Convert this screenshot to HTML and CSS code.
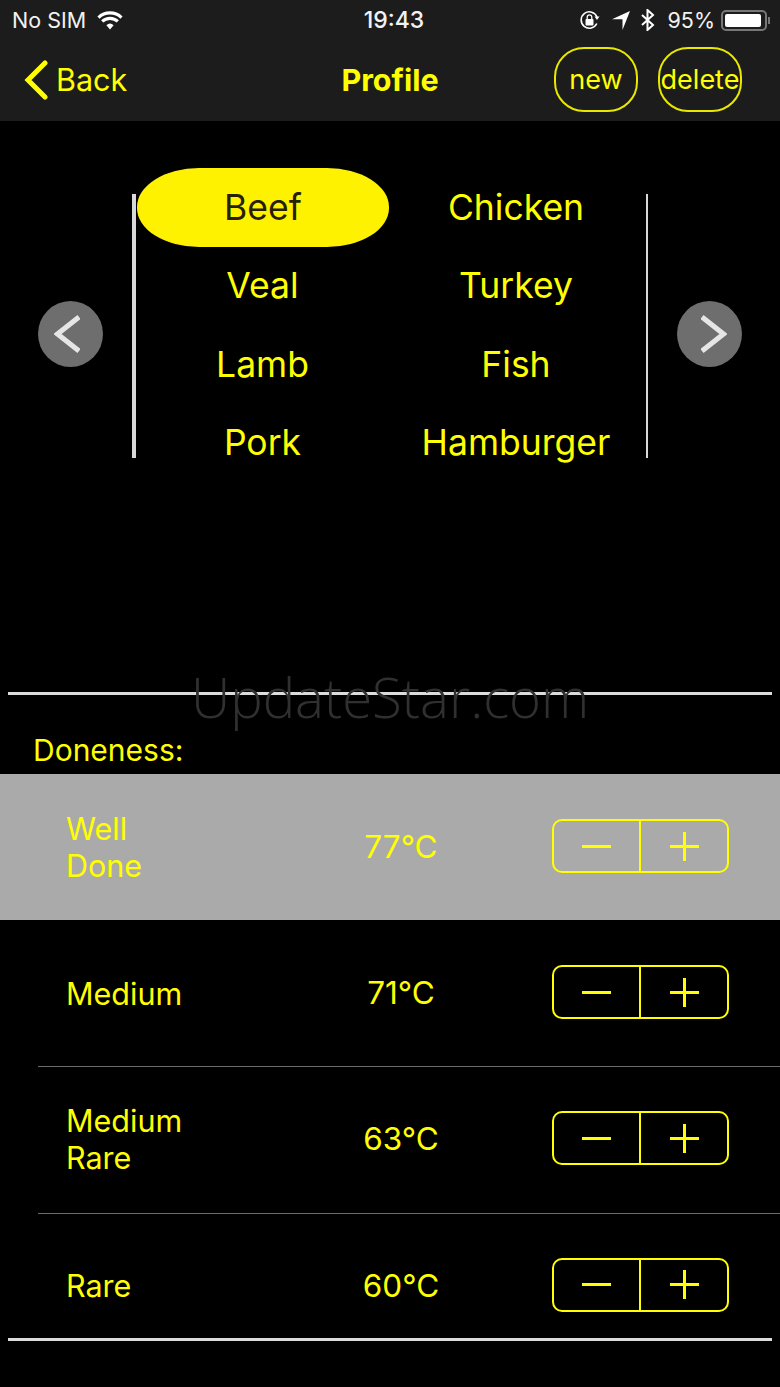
FILE: index.html
```html
<!DOCTYPE html>
<html lang="en">
<head>
  <meta charset="UTF-8">
  <meta name="viewport" content="width=device-width, initial-scale=1.0">
  <title>Profile</title>
  <link rel="stylesheet" href="styles.css">
</head>
<body>
  <!-- Top bars -->
  <header class="top">
    <div class="status">
      <div class="status-left">
        <span>No SIM</span>
        <svg class="wifi" width="26" height="19" viewBox="0 0 26 19">
          <path d="M13 18.5l3.6-4.3a5.4 5.4 0 0 0-7.2 0z" fill="#fff"/>
          <path d="M1.5 6.6a16.6 16.6 0 0 1 23 0M5.2 10.4a11.4 11.4 0 0 1 15.6 0" fill="none" stroke="#fff" stroke-width="3.2"/>
        </svg>
      </div>
      <div class="status-time">19:43</div>
      <div class="status-right">
        <svg width="21" height="21" viewBox="0 0 21 21">
          <path d="M17.8 13.5A8.2 8.2 0 1 1 18 7" fill="none" stroke="#fff" stroke-width="1.6"/>
          <path d="M15.5 6.5h5l-2.5 3.5z" fill="#fff"/>
          <rect x="6.5" y="9" width="8" height="6.5" rx="1" fill="#fff"/>
          <path d="M8.2 9V7.2a2.3 2.3 0 0 1 4.6 0V9" fill="none" stroke="#fff" stroke-width="1.3"/>
        </svg>
        <svg class="loc" width="18" height="19" viewBox="0 0 18 19"><path d="M18 0L10.5 19V8.2H0z" fill="#fff"/></svg>
        <svg class="bt" width="14" height="22" viewBox="0 0 14 22"><path d="M1 6l11 10-5.5 5V1L12 6 1 16" fill="none" stroke="#fff" stroke-width="2"/></svg>
        <span class="pct">95%</span>
        <div class="battery"><div class="battery-fill"></div></div>
        <div class="battery-nub"></div>
      </div>
    </div>

    <nav class="nav">
      <a class="back">
        <svg width="24" height="40" viewBox="0 0 24 40"><path d="M21 3L4 20l17 17" fill="none" stroke="#ffff00" stroke-width="5" stroke-linecap="round"/></svg>
        <span>Back</span>
      </a>
      <div class="nav-title">Profile</div>
      <div class="nav-actions">
        <button class="nav-btn">new</button>
        <button class="nav-btn">delete</button>
      </div>
    </nav>
  </header>

  <!-- Meat picker -->
  <section class="picker">
    <button class="arrow prev">
      <svg width="26" height="38" viewBox="0 0 26 38"><path d="M25 2L3.500 19 25 36" fill="none" stroke="#e6e6e6" stroke-width="5"/></svg>
    </button>
    <div class="picker-line"></div>
    <div class="meats">
      <div class="meat active">Beef</div>
      <div class="meat">Chicken</div>
      <div class="meat">Veal</div>
      <div class="meat">Turkey</div>
      <div class="meat">Lamb</div>
      <div class="meat">Fish</div>
      <div class="meat">Pork</div>
      <div class="meat">Hamburger</div>
    </div>
    <div class="picker-line thin"></div>
    <button class="arrow next">
      <svg width="26" height="38" viewBox="0 0 26 38"><path d="M1 2l21.500 17L1 36" fill="none" stroke="#e6e6e6" stroke-width="5"/></svg>
    </button>
  </section>

  <!-- Doneness list -->
  <section class="doneness">
    <div class="rule"></div>
    <div class="watermark">UpdateStar.com</div>
    <h2 class="doneness-title">Doneness:</h2>

    <div class="row selected">
      <div class="row-name">Well<br>Done</div>
      <div class="row-temp">77°C</div>
      <div class="stepper"><button class="step minus"></button><button class="step plus"></button></div>
    </div>
    <div class="row">
      <div class="row-name">Medium</div>
      <div class="row-temp">71°C</div>
      <div class="stepper"><button class="step minus"></button><button class="step plus"></button></div>
    </div>
    <div class="row">
      <div class="row-name">Medium<br>Rare</div>
      <div class="row-temp">63°C</div>
      <div class="stepper"><button class="step minus"></button><button class="step plus"></button></div>
    </div>
    <div class="row last">
      <div class="row-name">Rare</div>
      <div class="row-temp">60°C</div>
      <div class="stepper"><button class="step minus"></button><button class="step plus"></button></div>
    </div>
    <div class="rule"></div>
  </section>
</body>
</html>
```

FILE: styles.css
```css
/* General Styling */
* {
  box-sizing: border-box;
}

body {
  margin: 0;
  height: 1387px;
  overflow: hidden;
  background: #000;
  color: #ffff00;
  font-family: Inter, "Noto Sans", sans-serif;
}

button {
  font-family: inherit;
  padding: 0;
  background: none;
  color: inherit;
}

/* Top bars */
.top {
  height: 121px;
  background: #1c1c1c;
}

.status {
  height: 40px;
  padding: 0 10px 0 12px;
  display: grid;
  grid-template-columns: 1fr auto 1fr;
  align-items: center;
  color: #f2f2f2;
  font-size: 21.5px;
}

.status-left {
  display: flex;
  align-items: center;
  gap: 11px;
}

.status-time {
  font-size: 23px;
  font-weight: 500;
  margin-left: 6px;
}

.status-right {
  display: flex;
  align-items: center;
  justify-content: flex-end;
}

.loc {
  margin-left: 12px;
}

.bt {
  margin-left: 11px;
}

.pct {
  margin-left: 12px;
}

.battery {
  width: 46px;
  height: 21px;
  margin-left: 6px;
  padding: 2px;
  border: 2px solid #777;
  border-radius: 5px;
}

.battery-fill {
  width: 95%;
  height: 100%;
  background: #fff;
  border-radius: 2px;
}

.battery-nub {
  width: 2px;
  height: 7px;
  margin-left: 1px;
  background: #777;
}

.nav {
  height: 81px;
  padding: 0 38px 2px 24px;
  display: grid;
  grid-template-columns: 1fr auto 1fr;
  align-items: center;
}

.back {
  display: flex;
  align-items: center;
  gap: 8px;
  font-size: 30.5px;
}

.nav-title {
  margin-left: 14px;
  font-size: 30.5px;
  font-weight: 700;
}

.nav-actions {
  display: flex;
  justify-content: flex-end;
  gap: 20px;
}

.nav-btn {
  width: 84px;
  height: 65px;
  border: 2px solid #e8e800;
  border-radius: 30px;
  font-size: 27px;
}

/* Meat picker */
.picker {
  height: 571px;
  padding: 47px 38px 0;
  display: flex;
  align-items: flex-start;
}

.arrow {
  width: 66px;
  height: 66px;
  margin-top: 133px;
  border: none;
  border-radius: 50%;
  background: #6e6e6e;
  display: flex;
  align-items: center;
  justify-content: center;
}

.arrow.prev svg {
  margin-right: 8px;
}

.arrow.next svg {
  margin-left: 9px;
}

.picker-line {
  width: 4px;
  height: 264px;
  margin-top: 26px;
  margin-left: 29px;
  background: #d8d8d8;
}

.picker-line.thin {
  width: 2px;
  margin-left: 3px;
  margin-right: 29px;
}

.meats {
  width: 507px;
  display: grid;
  grid-template-columns: 253px 254px;
  grid-auto-rows: 78.5px;
}

.meat {
  display: flex;
  align-items: center;
  justify-content: center;
  font-size: 35.5px;
}

.meat.active {
  margin-left: 1px;
  background: #fff200;
  color: #2a1e00;
  border-radius: 62px / 39px;
}

/* Doneness list */
.doneness {
  position: relative;
}

.rule {
  height: 3px;
  margin: 0 8px;
  background: #dcdcdc;
}

.watermark {
  position: absolute;
  top: -32px;
  left: 191px;
  font-family: "Open Sans", sans-serif;
  font-size: 54.5px;
  font-weight: 300;
  color: #303030;
}

.doneness-title {
  height: 79px;
  margin: 0;
  padding: 37px 0 0 33px;
  font-size: 30px;
  line-height: 36px;
  font-weight: 400;
}

.row {
  height: 146.2px;
  padding: 0 51px 0 66px;
  display: flex;
  align-items: center;
  position: relative;
}

.row + .row::before {
  content: "";
  position: absolute;
  top: 0;
  left: 38px;
  right: 0;
  height: 1px;
  background: #6c6c6c;
}

.row.selected {
  background: #aaaaaa;
}

.row.selected + .row::before {
  display: none;
}

.row.last {
  margin-bottom: -21px;
}

.row-name {
  width: 269px;
  font-size: 30.5px;
  line-height: 37.5px;
}

.row-temp {
  width: 132px;
  margin-bottom: 1px;
  text-align: center;
  font-size: 31.5px;
}

.stepper {
  width: 177px;
  height: 54px;
  margin-left: auto;
  margin-bottom: 2px;
  border: 2px solid #ffff00;
  border-radius: 10px;
  display: flex;
}

.step {
  flex: 1;
  border: none;
  position: relative;
}

.step.minus {
  flex: none;
  width: 87px;
  border-right: 2px solid #ffff00;
}

.step::before {
  content: "";
  position: absolute;
  left: 50%;
  top: 50%;
  width: 29px;
  height: 3px;
  margin: -1.5px 0 0 -14.5px;
  background: #ffff00;
}

.step.plus::after {
  content: "";
  position: absolute;
  left: 50%;
  top: 50%;
  width: 3px;
  height: 29px;
  margin: -14.5px 0 0 -1.5px;
  background: #ffff00;
}
```
